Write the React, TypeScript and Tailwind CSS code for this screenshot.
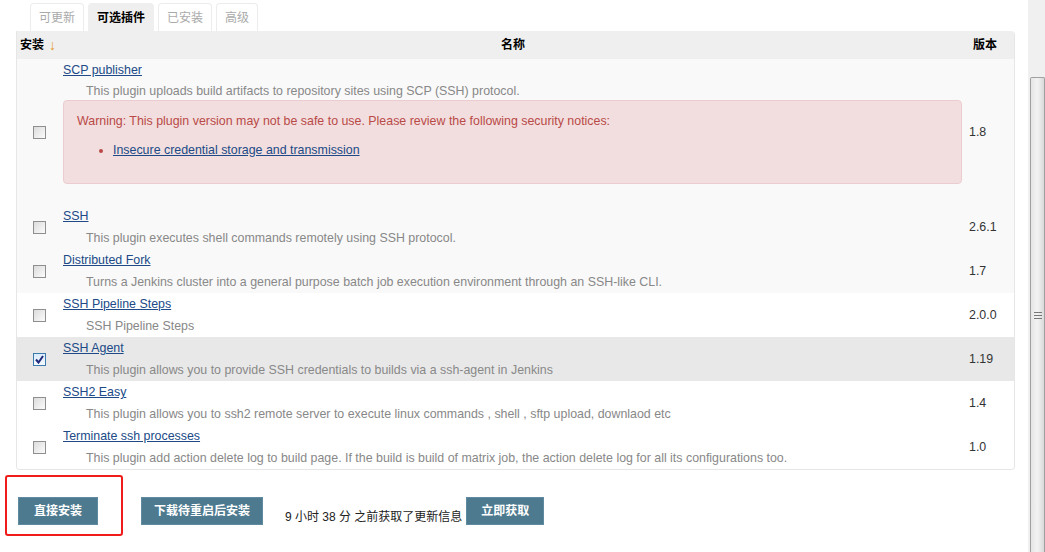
import React from "react";

/* ---------------- DATA ---------------- */

type Plugin = {
  name: string;
  desc: string;
  version: string;
  checked?: boolean;
  warning?: boolean;
  bg: string;
};

const plugins: Plugin[] = [
  {
    name: "SCP publisher",
    desc: "This plugin uploads build artifacts to repository sites using SCP (SSH) protocol.",
    version: "1.8",
    warning: true,
    bg: "bg-[#f9f9f9]",
  },
  {
    name: "SSH",
    desc: "This plugin executes shell commands remotely using SSH protocol.",
    version: "2.6.1",
    bg: "bg-[#f9f9f9]",
  },
  {
    name: "Distributed Fork",
    desc: "Turns a Jenkins cluster into a general purpose batch job execution environment through an SSH-like CLI.",
    version: "1.7",
    bg: "bg-[#f9f9f9]",
  },
  {
    name: "SSH Pipeline Steps",
    desc: "SSH Pipeline Steps",
    version: "2.0.0",
    bg: "bg-white",
  },
  {
    name: "SSH Agent",
    desc: "This plugin allows you to provide SSH credentials to builds via a ssh-agent in Jenkins",
    version: "1.19",
    checked: true,
    bg: "bg-[#e8e8e8]",
  },
  {
    name: "SSH2 Easy",
    desc: "This plugin allows you to ssh2 remote server to execute linux commands , shell , sftp upload, downlaod etc",
    version: "1.4",
    bg: "bg-white",
  },
  {
    name: "Terminate ssh processes",
    desc: "This plugin add action delete log to build page. If the build is build of matrix job, the action delete log for all its configurations too.",
    version: "1.0",
    bg: "bg-white",
  },
];

const tabs = [
  { label: "可更新", active: false },
  { label: "可选插件", active: true },
  { label: "已安装", active: false },
  { label: "高级", active: false },
];

const cjk = "font-['Liberation_Sans','Noto_Sans_CJK_SC',sans-serif]";

/* ---------------- PIECES ---------------- */

function Checkbox({ checked }: { checked?: boolean }) {
  if (checked) {
    return (
      <span className="w-[13px] h-[13px] border border-[#3d7bad] bg-gradient-to-b from-[#dcecfc] to-[#f4f9fe] flex items-center justify-center">
        <svg width="9" height="9" viewBox="0 0 9 9">
          <path d="M1 4.5 L3.5 7.5 L8 1" fill="none" stroke="#1f2a7a" strokeWidth="2" />
        </svg>
      </span>
    );
  }
  return (
    <span className="w-[13px] h-[13px] border border-[#8e8f8f] bg-gradient-to-br from-[#dcdcdc] to-[#fbfbfb] block" />
  );
}

function Row({ p }: { p: Plugin }) {
  return (
    <div className={`flex items-stretch ${p.bg}`}>
      <div className="w-[46px] flex items-center pl-[16px]">
        <Checkbox checked={p.checked} />
      </div>
      <div className="flex-1 flex flex-col text-[12.4px]">
        <div className="h-[22px] leading-[22px]">
          <a className="text-[#204a87] underline">{p.name}</a>
        </div>
        <div
          className={`pl-[23px] text-[#888] ${
            p.warning ? "h-[19px] leading-[20px]" : "h-[22px] leading-[22px]"
          }`}
        >
          {p.desc}
        </div>
        {p.warning && (
          <div className="mb-[21px] mr-[1px] bg-[#f2dede] border border-[#ebccd1] rounded-[4px] px-[13px] py-[13px] text-[#b94a48]">
            <p className="leading-[15px]">
              Warning: This plugin version may not be safe to use. Please review
              the following security notices:
            </p>
            <ul className="list-disc pl-[36px] mt-[14px] mb-[12px] leading-[15px]">
              <li>
                <a className="text-[#204a87] underline">
                  Insecure credential storage and transmission
                </a>
              </li>
            </ul>
          </div>
        )}
      </div>
      <div className="w-[51px] flex items-center pl-[6px] text-[#333] text-[12.4px]">
        {p.version}
      </div>
    </div>
  );
}

/* ---------------- PAGE ---------------- */

export default function App() {
  return (
    <div className={`w-[1045px] h-[552px] flex overflow-hidden bg-white text-[12px] ${cjk}`}>
      {/* MAIN */}
      <div className="flex-1 relative pl-[16px] pr-[13px] pt-[3px]">
        {/* TABS */}
        <div className="flex gap-[4px] pl-[14px] h-[28px]">
          {tabs.map((t) => (
            <div
              key={t.label}
              className={`h-[28px] px-[8px] flex items-center rounded-t-[4px] border border-b-0 ${
                t.active
                  ? "bg-[#efefef] border-[#efefef] font-bold text-black"
                  : "bg-white border-[#ececec] text-[#aaa]"
              }`}
            >
              {t.label}
            </div>
          ))}
        </div>

        {/* TABLE */}
        <div className="border border-t-0 border-[#e6e6e6] rounded-b-[4px] rounded-tr-[4px] overflow-hidden">
          <div className="h-[28px] flex items-center bg-[#efefef] font-bold text-black">
            <div className="w-[46px] pl-[3px] flex items-center gap-[5px]">
              安装
              <span className="text-[#e8982a] text-[14px] leading-none">↓</span>
            </div>
            <div className="flex-1 text-center">名称</div>
            <div className="w-[51px] pl-[10px]">版本</div>
          </div>
          {plugins.map((p) => (
            <Row key={p.name} p={p} />
          ))}
        </div>

        {/* ACTIONS */}
        <div className="flex items-end mt-[27px] pl-[2px]">
          <button className="h-[28px] w-[80px] bg-[#4d7a8f] border border-[#5f8aa0] text-white font-bold">
            直接安装
          </button>
          <button className="h-[28px] w-[122px] ml-[43px] bg-[#4d7a8f] border border-[#5f8aa0] text-white font-bold">
            下载待重启后安装
          </button>
          <span className="ml-[22px] text-[#222] leading-[16px]">
            9 小时 38 分 之前获取了更新信息
          </span>
          <button className="h-[28px] w-[78px] ml-[4px] bg-[#4d7a8f] border border-[#5f8aa0] text-white font-bold">
            立即获取
          </button>
        </div>

        {/* ANNOTATION */}
        <div className="absolute left-[5px] top-[475px] w-[118px] h-[61px] border-[2px] border-[#f01c1c] rounded-[3px]" />
      </div>

      {/* SCROLLBAR */}
      <div className="w-[17px] bg-[#f0f0f0] flex flex-col pt-[77px] pl-[2px]">
        <div className="flex-1 bg-gradient-to-r from-[#e6e6e6] via-[#f2f2f2] to-[#dadada] border border-[#a0a0a0] border-b-0 rounded-t-[2px] flex flex-col items-center pt-[234px]">
          <div className="w-[8px] flex flex-col gap-[2px]">
            <span className="h-[1px] bg-[#777]" />
            <span className="h-[1px] bg-[#777]" />
            <span className="h-[1px] bg-[#777]" />
          </div>
        </div>
      </div>
    </div>
  );
}
